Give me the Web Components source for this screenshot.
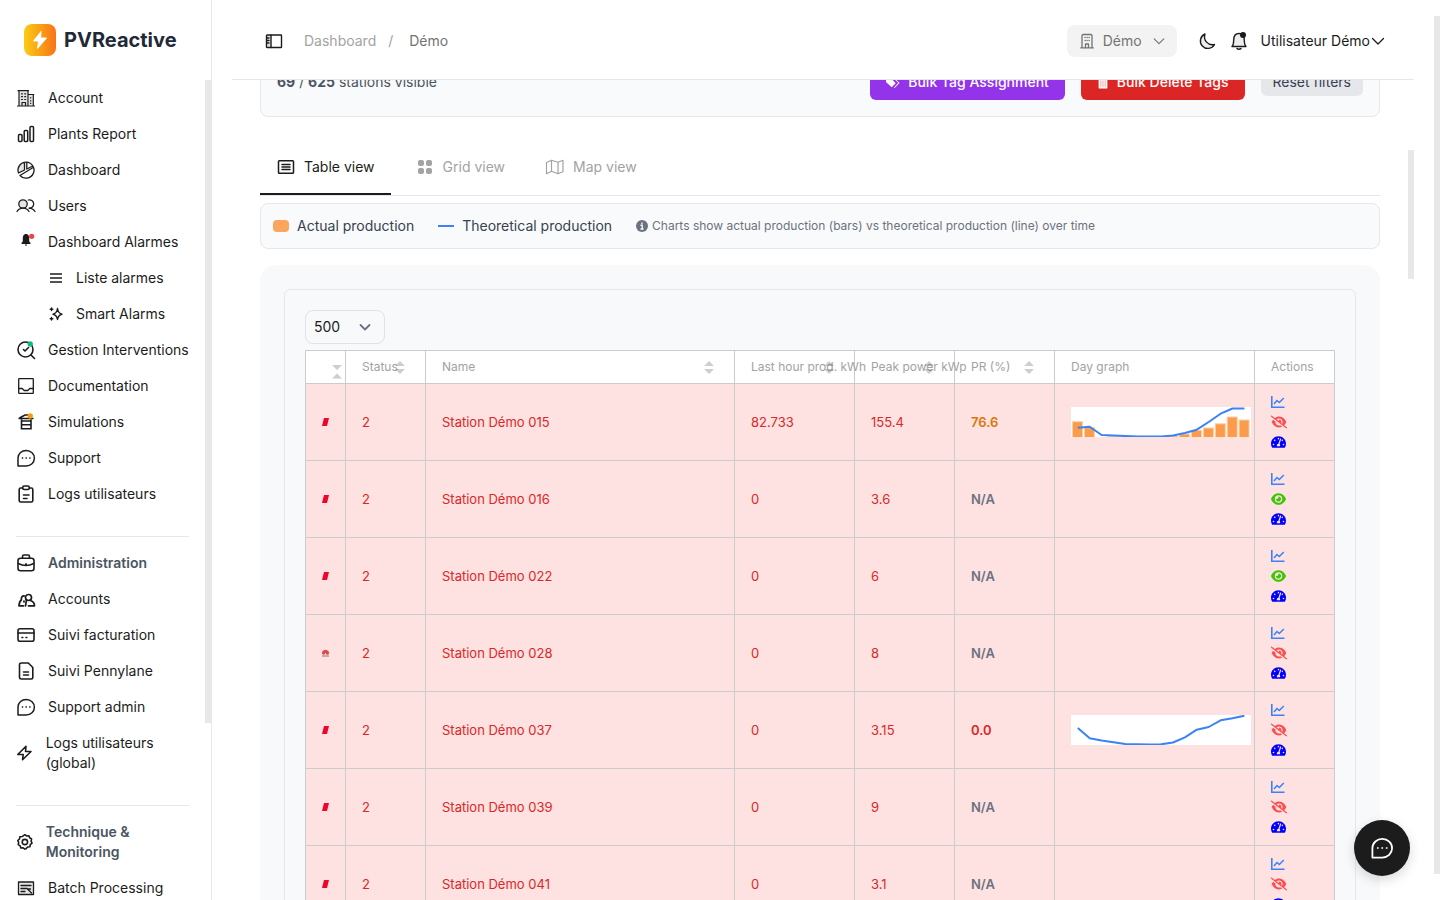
<!DOCTYPE html>
<html lang="fr">
<head>
<meta charset="utf-8">
<meta name="viewport" content="width=device-width, initial-scale=1">
<title>PVReactive</title>
<style>
  html, body { height: 100%; margin: 0; }
  body {
    font-family: Inter, "Liberation Sans", sans-serif;
    font-size: 14px;
    line-height: 20px;
    color: #1c1c1c;
    background: #fff;
    overflow: hidden;
  }
</style>
</head>
<body>
<pv-app></pv-app>

<script>
// every icon is drawn with currentColor; [viewBox, markup]
const LINE = 'fill="none" stroke="currentColor" stroke-linecap="round" stroke-linejoin="round"';
const ICONS = {
  bolt: ['0 0 32 32', '<path d="M17 7.5 9.500 17h5l-1 7.500L22.500 14h-5.800z" fill="#fff" stroke="#fff" stroke-width="1" stroke-linejoin="round"/>'],
  building: ['0 0 20 20', `<path d="M3 3h9v15H3zM13 6h4v12h-4z" fill="#e4e4e4"/><g ${LINE} stroke-width="1.2"><path d="M1.5 18h17M2 2.7h10.500M3 3v15M12 3v15M12 6.500h5.800M17.300 6.500V18M6 18v-3.500h3.500V18"/><path d="M5.500 5.800h1M8.700 5.800h1M5.500 8.700h1M8.700 8.700h1M5.500 11.500h1M8.700 11.500h1M14.700 9.500v.5M14.700 12.500v.5M14.700 15v.5"/></g>`],
  bars: ['0 0 20 20', `<g ${LINE} stroke-width="1.5"><rect x="2.5" y="10.5" width="3.5" height="7" rx="1"/><rect x="8.2" y="6.5" width="3.5" height="11" rx="1"/><rect x="14" y="2.5" width="3.5" height="15" rx="1"/></g>`],
  pie: ['0 0 20 20', `<path d="M9 2.5V10L3 13C1.5 8 4 3.5 9 2.5z" fill="#e4e4e4"/><g ${LINE} stroke-width="1.3"><path d="M2.5 13A8 8 0 1 1 4 15.5M2.5 13l6-3V2.3M10.8 2.3V9l6-3M4 15.5 17.5 7.3"/></g>`],
  users: ['0 0 20 20', `<circle cx="7" cy="8" r="4" fill="#e4e4e4"/><g ${LINE} stroke-width="1.3"><circle cx="7" cy="8" r="4.2"/><path d="M1 15.5C2.5 13 4.5 12.2 7 12.2s4.500.8 6 3.3M12.3 4a4.200 4.200 0 1 1 .7 8.200c2.500 0 4.500 1 6 3.300"/></g>`],
  alarm: ['0 0 20 20', '<path d="M10 2C7.300 2 6.800 4.500 6.800 6.500v2.700L5.500 11v1h9v-1l-1.300-1.800V6.500C13.200 4.500 12.700 2 10 2zM8.800 12.500h2.400L10 14.200z" fill="currentColor"/><circle cx="15.7" cy="4.3" r="2.6" fill="#ef4444"/>'],
  list: ['0 0 16 16', '<path d="M2 4h12M2 8h12M2 12h12" stroke="currentColor" stroke-width="1.4"/>'],
  sparkle: ['0 0 16 16', `<g ${LINE} stroke-width="1.4"><path d="M9.500 2.500c.5 3.500 1.500 5 4.500 5.700-3 .7-4 2-4.500 5.300-.5-3.300-1.500-4.600-4.500-5.300 3-.7 4-2.200 4.500-5.700z"/><path d="M3.500 2v2.600M2.200 3.300h2.600M3.500 11.500v2.600M2.200 12.800h2.600"/></g>`],
  searchCheck: ['0 0 20 20', `<g ${LINE} stroke-width="1.6"><circle cx="9.5" cy="9.5" r="7.5"/><path d="m15 15 3.5 3.5M7.5 9.5 9 11l3.500-3.500"/></g><circle cx="14.2" cy="4" r="2.7" fill="#10b981"/>`],
  inbox: ['0 0 20 20', `<g ${LINE} stroke-width="1.3"><rect x="2.7" y="2.7" width="14.6" height="14.6" rx=".6"/><path d="M2.700 12.500h3.500l2 2h3.600l2-2h3.500"/></g>`],
  archive: ['0 0 20 20', `<g fill="none" stroke="currentColor" stroke-width="1.6"><path d="M2.500 6.500h15M3.500 6 9 3h5M5.500 7.500v9.200h9.500V7.500M5.500 9h9.500M5.500 12.700h9.500"/></g><circle cx="14.2" cy="4" r="2.7" fill="#f59e0b"/>`],
  chat: ['0 0 20 20', `<g ${LINE} stroke-width="1.5"><path d="M2 18V10a8.200 7.800 0 1 1 8.200 8z"/></g><path d="M5.800 9.300h1.400v1.400H5.800zM9.500 9.300h1.400v1.400H9.500zM13.200 9.300h1.400v1.400h-1.400z" fill="currentColor"/>`],
  clipboard: ['0 0 20 20', `<g ${LINE} stroke-width="1.6"><path d="M6.500 4H4.700c-1 0-1.500.5-1.500 1.500v11c0 1 .5 1.500 1.500 1.500h10.600c1 0 1.500-.5 1.500-1.500v-11c0-1-.5-1.500-1.500-1.500h-1.800"/><rect x="6.7" y="2" width="6.6" height="3.5" rx="1.5"/><path d="M7.500 11h5.500M7.500 14.500h3.500"/></g>`],
  briefcase: ['0 0 20 20', `<g ${LINE} stroke-width="1.6"><rect x="2" y="5.3" width="16" height="12.5" rx="2.5"/><path d="M6.500 5V3.500C6.500 2.500 7 2 8 2h4c1 0 1.500.5 1.500 1.500V5M2.200 10.500c5 2.500 10.600 2.500 15.600 0M9.700 11h.6"/></g>`],
  people: ['0 0 20 20', `<g ${LINE} stroke-width="1.7"><circle cx="12.500" cy="8.500" r="3"/><path d="M10.500 11 9.500 16.800M14.500 11.500c2.500.8 4 2.500 4 5.300h-6M8.500 7c-2.500-.3-3.700 1.800-3 3.800-1.800 1.200-2.300 3.200-2.500 6h4.500M8 12v1"/></g>`],
  card: ['0 0 20 20', `<g ${LINE} stroke-width="1.6"><rect x="2" y="3.7" width="16" height="12.6" rx="2"/><path d="M2 8h16M6 12.500h.8M10 12.500h.8"/></g>`],
  file: ['0 0 20 20', `<g ${LINE} stroke-width="1.6"><path d="M5.500 2h6.800l4.500 4.500v9.800c0 1-.7 1.700-1.700 1.700H5.500c-1.200 0-2-.7-2-1.700V3.700c0-1 .8-1.700 2-1.700zM7.500 11h5M7.500 14h5"/></g>`],
  zap: ['0 0 20 20', `<g ${LINE} stroke-width="1.8"><path d="M11.300 2.300 2 11.700h6.200l-.8 6L17 8.300h-6.200z"/></g>`],
  gear: ['0 0 20 20', `<g ${LINE} stroke-width="1.8"><path d="m10 1.800 2 1.400 2.500-.3.800 2.300 2.200 1.300-.5 2.500 1 2.300-2 1.600-.4 2.500-2.500.2L11.300 17.500 10 18l-2-1.500-2.500.3-.8-2.400L2.500 13l.5-2.500-1-2.200 2-1.700.3-2.500 2.600-.2z"/><circle cx="10" cy="10" r="3"/></g>`],
  batch: ['0 0 20 20', `<rect x="3" y="4" width="14" height="12" fill="#e4e4e4"/><g ${LINE} stroke-width="1.3"><rect x="2.5" y="4" width="15" height="12.5"/><path d="M5 7.500h10M5 10.500h6M5 13.500h4M11.500 11l4 4M12 11h2.500"/></g>`],
  panel: ['0 0 20 20', `<path d="M3 4h4v13H3z" fill="#e4e4e4"/><g ${LINE} stroke-width="1.4"><rect x="2.5" y="4" width="15" height="12.5" rx=".6"/><path d="M7 4v12.500M3 7h2M3 9.500h2M3 12h2"/></g>`],
  office: ['0 0 20 20', `<g ${LINE} stroke-width="1.3"><path d="M5 16.500V4.800C5 4 5.500 3.500 6.300 3.500h7.400c.8 0 1.300.5 1.300 1.300v11.700M3.700 16.800h12.600M8.500 16.500v-3.500h3v3.500"/><path d="M8 6.500h.2M10 6.500h.2M12 6.500h.2M8 9.500h.2M10 9.500h.2M12 9.500h.2"/></g>`],
  chevron: ['0 0 16 16', `<path ${LINE} stroke-width="1.3" d="m2.500 5.500 5.500 5.500 5.500-5.500"/>`],
  chevronBold: ['0 0 12 12', `<path ${LINE} stroke-width="1.8" d="m1.500 4 4.500 4.500L10.500 4"/>`],
  moon: ['0 0 20 20', '<path d="M8 3a8 8 0 0 0 9.500 10.500A7.500 7.500 0 1 1 8 3z" fill="#ededed" stroke="currentColor" stroke-width="1.4" stroke-linejoin="round"/>'],
  bell: ['0 0 20 20', `<path d="M3 15.500h14c-1.700-1.700-1.700-3.500-1.700-6.500 0-4.500-2.300-6.500-5.300-6.500S4.700 4.500 4.700 9c0 3 0 4.800-1.700 6.500z" fill="#ededed"/><g ${LINE} stroke-width="1.4"><path d="M3 15.500h14c-1.700-1.700-1.700-3.500-1.700-6.500 0-4.500-2.300-6.500-5.300-6.500S4.700 4.500 4.700 9c0 3 0 4.800-1.700 6.500zM8 17.500c.8 1 3.200 1 4 0"/></g><circle cx="14" cy="4" r="3" fill="currentColor"/>`],
  table: ['0 0 20 20', `<g ${LINE} stroke-width="1.5"><rect x="2.5" y="3.7" width="15" height="12.6" rx=".8"/><path d="M6 7.500h8M6 10h8M6 12.500h8"/></g>`],
  grid: ['0 0 20 20', '<g fill="currentColor"><rect x="3" y="3" width="6" height="6" rx="2"/><rect x="11" y="3" width="6" height="6" rx="2"/><rect x="3" y="11" width="6" height="6" rx="2"/><rect x="11" y="11" width="6" height="6" rx="2"/></g>'],
  map: ['0 0 20 20', `<g ${LINE} stroke-width="1.2"><path d="m1.500 5.500 5-2.200L13 5.300l5-2v11.400l-5 2-6.500-2.400-5 2.400zM6.500 3.500v10.700M13 5.300v11.200"/></g>`],
  tags: ['0 0 16 16', '<path d="M0 3v5l6.500 6L11 9.500 5 3zM8 3l6 6-5 5.200.8.6 5.700-5.800L9 3z" fill="currentColor"/>'],
  trash: ['0 0 12 16', '<path d="M1 4h10v10.500c0 .6-.4 1-1 1H2c-.6 0-1-.4-1-1zM0 1.500h12V3H0zM4 .5h4v1H4z" fill="currentColor"/><path d="M3.500 6v7.500M6 6v7.500M8.500 6v7.500" stroke="#f08080" stroke-width=".8"/>'],
  info: ['0 0 16 16', '<circle cx="8" cy="8" r="8" fill="currentColor"/><path d="M8 3.300v2M6 7h2.300v5M6 12h4" stroke="#fff" stroke-width="1.7" fill="none"/>'],
  chart: ['0 0 16 16', '<path d="M.8 2v11.200h12.700" stroke="currentColor" stroke-width="1.6" fill="none"/><path d="m3 10 3-3.500 2.300 2L12.800 4" stroke="currentColor" stroke-width="1.5" fill="none"/>'],
  eye: ['0 0 576 512', '<path fill="currentColor" d="M288 32c-80.8 0-145.5 36.8-192.6 80.6C48.6 156 17.3 208 2.5 243.7c-3.3 7.9-3.3 16.7 0 24.6C17.3 304 48.6 356 95.4 399.4C142.5 443.2 207.2 480 288 480s145.5-36.8 192.6-80.6c46.8-43.5 78.1-95.4 93-131.1c3.3-7.9 3.3-16.7 0-24.6c-14.9-35.7-46.2-87.7-93-131.1C433.5 68.8 368.8 32 288 32zM144 256a144 144 0 1 1 288 0 144 144 0 1 1 -288 0zm144-64c0 35.3-28.7 64-64 64c-7.1 0-13.9-1.2-20.3-3.3c-5.5-1.8-11.9 1.6-11.7 7.4c.3 6.9 1.3 13.8 3.2 20.7c13.7 51.2 66.4 81.6 117.6 67.9s81.6-66.4 67.9-117.6c-11.1-41.5-47.8-69.4-88.6-71.1c-5.8-.2-9.2 6.1-7.4 11.7c2.1 6.4 3.3 13.2 3.3 20.3z"/>'],
  eyeSlash: ['0 0 640 512', '<path fill="currentColor" d="M38.8 5.1C28.4-3.1 13.3-1.2 5.1 9.2S-1.2 34.7 9.2 42.9l592 464c10.4 8.2 25.5 6.3 33.7-4.1s6.3-25.5-4.1-33.7L525.6 386.7c39.6-40.6 66.4-86.1 79.9-118.4c3.3-7.9 3.3-16.7 0-24.6c-14.9-35.7-46.2-87.7-93-131.1C465.5 68.8 400.8 32 320 32c-68.2 0-125 26.3-169.3 60.8L38.8 5.1zM223.1 149.5C248.6 126.2 282.7 112 320 112c79.5 0 144 64.5 144 144c0 24.9-6.3 48.3-17.4 68.7L408 294.5c8.4-19.3 10.6-41.4 4.8-63.3c-11.1-41.5-47.8-69.4-88.6-71.1c-5.8-.2-9.2 6.1-7.4 11.7c2.1 6.4 3.3 13.2 3.3 20.3c0 10.2-2.4 19.8-6.6 28.3l-90.3-70.8zM373 389.9c-16.4 6.5-34.3 10.1-53 10.1c-79.5 0-144-64.5-144-144c0-6.9 .5-13.6 1.4-20.2L83.1 161.5C60.3 191.2 44 220.8 34.5 243.7c-3.3 7.9-3.3 16.7 0 24.6c14.9 35.7 46.2 87.7 93 131.1C174.5 443.2 239.2 480 320 480c47.8 0 89.9-12.9 126.2-32.5L373 389.9z"/>'],
  gauge: ['0 0 576 512', '<path fill="currentColor" d="M288 32C128.94 32 0 160.94 0 320c0 52.8 14.25 102.26 39.06 144.8 5.61 9.62 16.3 15.2 27.44 15.2h443c11.14 0 21.83-5.58 27.44-15.2C561.75 422.26 576 372.8 576 320c0-159.06-128.94-288-288-288zm0 64c14.71 0 26.58 10.13 30.32 23.65-1.11 2.26-2.64 4.23-3.45 6.67l-9.22 27.67c-5.13 3.49-10.97 6.01-17.64 6.01-17.67 0-32-14.33-32-32S270.33 96 288 96zM96 384c-17.67 0-32-14.33-32-32s14.33-32 32-32 32 14.33 32 32-14.33 32-32 32zm48-160c-17.67 0-32-14.33-32-32s14.33-32 32-32 32 14.33 32 32-14.33 32-32 32zm246.77-72.41l-61.33 184C343.13 347.33 352 364.54 352 384c0 11.72-3.38 22.55-8.88 32H232.88c-5.5-9.45-8.88-20.28-8.88-32 0-33.94 26.5-61.43 59.9-63.59l61.34-184.01c4.17-12.56 17.73-19.45 30.36-15.17 12.57 4.19 19.35 17.79 15.17 30.36zm14.66 57.2l15.52-46.55c3.47-1.29 7.13-2.23 11.05-2.23 17.67 0 32 14.33 32 32s-14.33 32-32 32c-11.38-.01-20.89-6.28-26.57-15.22zM480 384c-17.67 0-32-14.33-32-32s14.33-32 32-32 32 14.33 32 32-14.33 32-32 32z"/>'],
  sort: ['0 0 10 14', '<path d="M0 6 5 1l5 5zM0 9h10l-5 5z" fill="currentColor"/>'],
  sortFlip: ['0 0 10 14', '<path d="M0 0h10L5 5zM0 13.500l5-5 5 5z" fill="currentColor"/>'],
  brandSlash: ['0 0 8 8', '<path d="M2 0h5L5 8H0z" fill="#f0042c"/>'],
  brandPetals: ['0 0 8 8', '<path d="M0 5C0 3 .5 1.500 1.500 1.500 3 .5 4 .5 5.500 1.500 6.500 1.500 7 3 7 5L5 6 3.500 4 2 6z" fill="#e04848"/><path d="M0 7h7" stroke="#8a7070"/>']
};

class PvIcon extends HTMLElement {
  constructor() {
    super();
    this.attachShadow({ mode: 'open' });
  }

  connectedCallback() {
    const [box, body] = ICONS[this.getAttribute('name')];
    this.shadowRoot.innerHTML = `
      <style>
        :host { display: block; width: 20px; height: 20px; }
        svg { display: block; width: 100%; height: 100%; }
      </style>
      <svg viewBox="${box}" aria-hidden="true">${body}</svg>
    `;
  }
}
customElements.define('pv-icon', PvIcon);

class PvNavItem extends HTMLElement {
  constructor() {
    super();
    this.attachShadow({ mode: 'open' });
  }

  connectedCallback() {
    this.shadowRoot.innerHTML = `
      <style>
        :host { display: block; }
        a {
          display: flex;
          align-items: center;
          gap: 12px;
          padding: 8px 0;
          color: inherit;
          text-decoration: none;
        }
        :host([sub]) a { padding-left: 32px; }
        :host([sub]) pv-icon { width: 16px; height: 16px; }
        :host([heading]) { color: #4b5563; font-weight: 600; }
        :host([heading]) pv-icon { color: #1c1c1c; }
      </style>
      <a href="#"><pv-icon name="${this.getAttribute('icon')}"></pv-icon><span><slot></slot></span></a>
    `;
  }
}
customElements.define('pv-nav-item', PvNavItem);

class PvSidebar extends HTMLElement {
  constructor() {
    super();
    this.attachShadow({ mode: 'open' });
  }

  connectedCallback() {
    this.shadowRoot.innerHTML = `
      <style>
        :host {
          display: flex;
          flex-direction: column;
          position: relative;
          box-sizing: border-box;
          width: 212px;
          border-right: 1px solid #e5e7eb;
          overflow: hidden;
        }
        .brand {
          flex: none;
          display: flex;
          align-items: center;
          gap: 8px;
          padding: 24px;
          font-size: 20px;
          line-height: 32px;
          font-weight: 700;
          color: #1f2937;
        }
        .logo {
          border-radius: 8px;
          background: linear-gradient(90deg, #facc15, #f97316);
        }
        .logo pv-icon { width: 32px; height: 32px; }
        nav {
          flex: 1;
          min-height: 0;
          overflow: hidden;
          padding: 0 22px 0 16px;
        }
        hr {
          height: 1px;
          margin: 24px 0 8px;
          border: 0;
          background: #e5e7eb;
        }
        .thumb {
          position: absolute;
          top: 80px;
          right: 0;
          width: 6px;
          height: 643px;
          background: #e8e8e8;
        }
      </style>
      <div class="brand"><span class="logo"><pv-icon name="bolt"></pv-icon></span>PVReactive</div>
      <nav>
        <pv-nav-item icon="building">Account</pv-nav-item>
        <pv-nav-item icon="bars">Plants Report</pv-nav-item>
        <pv-nav-item icon="pie">Dashboard</pv-nav-item>
        <pv-nav-item icon="users">Users</pv-nav-item>
        <pv-nav-item icon="alarm">Dashboard Alarmes</pv-nav-item>
        <pv-nav-item sub icon="list">Liste alarmes</pv-nav-item>
        <pv-nav-item sub icon="sparkle">Smart Alarms</pv-nav-item>
        <pv-nav-item icon="searchCheck">Gestion Interventions</pv-nav-item>
        <pv-nav-item icon="inbox">Documentation</pv-nav-item>
        <pv-nav-item icon="archive">Simulations</pv-nav-item>
        <pv-nav-item icon="chat">Support</pv-nav-item>
        <pv-nav-item icon="clipboard">Logs utilisateurs</pv-nav-item>
        <hr>
        <pv-nav-item heading icon="briefcase">Administration</pv-nav-item>
        <pv-nav-item icon="people">Accounts</pv-nav-item>
        <pv-nav-item icon="card">Suivi facturation</pv-nav-item>
        <pv-nav-item icon="file">Suivi Pennylane</pv-nav-item>
        <pv-nav-item icon="chat">Support admin</pv-nav-item>
        <pv-nav-item icon="zap">Logs utilisateurs (global)</pv-nav-item>
        <hr>
        <pv-nav-item heading icon="gear">Technique &amp; Monitoring</pv-nav-item>
        <pv-nav-item icon="batch">Batch Processing</pv-nav-item>
      </nav>
      <div class="thumb"></div>
    `;
  }
}
customElements.define('pv-sidebar', PvSidebar);

class PvTopbar extends HTMLElement {
  constructor() {
    super();
    this.attachShadow({ mode: 'open' });
  }

  connectedCallback() {
    this.shadowRoot.innerHTML = `
      <style>
        :host {
          display: flex;
          align-items: center;
          flex: none;
          padding: 25px 28px 22px;
          border-bottom: 1px solid #e5e7eb;
        }
        button {
          display: flex;
          align-items: center;
          border: 0;
          padding: 0;
          background: none;
          font: inherit;
          color: inherit;
        }
        .toggle { padding: 0 4px; }
        .crumbs { display: flex; gap: 12px; margin-left: 16px; color: #a3a3a3; }
        .crumbs a { color: inherit; text-decoration: none; }
        .crumbs .here { color: #737373; margin-left: 4px; }
        .right { display: flex; align-items: center; gap: 12px; margin-left: auto; }
        .account {
          gap: 6px;
          height: 32px;
          padding: 0 10px;
          margin-right: 8px;
          border-radius: 8px;
          background: #f3f3f3;
          color: #737373;
        }
        .account .arrow { width: 14px; height: 14px; margin: 0 1px 0 4px; }
        .user .arrow { width: 16px; height: 16px; }
      </style>
      <button class="toggle" aria-label="Menu"><pv-icon name="panel"></pv-icon></button>
      <div class="crumbs"><a href="#">Dashboard</a><span>/</span><span class="here">Démo</span></div>
      <div class="right">
        <button class="account"><pv-icon name="office"></pv-icon>Démo<pv-icon class="arrow" name="chevron"></pv-icon></button>
        <button aria-label="Thème"><pv-icon name="moon"></pv-icon></button>
        <button aria-label="Notifications"><pv-icon name="bell"></pv-icon></button>
        <button class="user">Utilisateur Démo<pv-icon class="arrow" name="chevron"></pv-icon></button>
      </div>
    `;
  }
}
customElements.define('pv-topbar', PvTopbar);

class PvFilterBar extends HTMLElement {
  constructor() {
    super();
    this.attachShadow({ mode: 'open' });
  }

  connectedCallback() {
    this.shadowRoot.innerHTML = `
      <style>
        :host {
          display: flex;
          align-items: center;
          gap: 16px;
          padding: 16px;
          border: 1px solid #e5e7eb;
          border-radius: 8px;
          background: #f9fafb;
          color: #4b5563;
        }
        .count { margin-right: auto; }
        b { font-weight: 700; }
        button {
          display: flex;
          align-items: center;
          gap: 8px;
          height: 36px;
          padding: 0 16px;
          border: 0;
          border-radius: 6px;
          font: inherit;
          font-weight: 500;
          color: #fff;
        }
        pv-icon { width: 14px; height: 14px; }
        .tag { background: #9333ea; }
        .delete { background: #dc2626; }
        .delete pv-icon { width: 12px; }
        .reset {
          height: 28px;
          padding: 0 12px;
          font-weight: 400;
          background: #e5e7eb;
          color: #374151;
        }
      </style>
      <span class="count"><b>69</b> / <b>625</b> stations visible</span>
      <button class="tag"><pv-icon name="tags"></pv-icon>Bulk Tag Assignment</button>
      <button class="delete"><pv-icon name="trash"></pv-icon>Bulk Delete Tags</button>
      <button class="reset">Reset filters</button>
    `;
  }
}
customElements.define('pv-filter-bar', PvFilterBar);

class PvTabs extends HTMLElement {
  constructor() {
    super();
    this.attachShadow({ mode: 'open' });
  }

  connectedCallback() {
    this.shadowRoot.innerHTML = `
      <style>
        :host {
          display: flex;
          gap: 8px;
          margin-top: 22px;
          box-shadow: 0 1px #e5e7eb;
        }
        button {
          display: flex;
          align-items: center;
          gap: 8px;
          height: 56px;
          padding: 0 16px;
          border: 0;
          background: none;
          font: inherit;
          color: #a3a3a3;
        }
        .active { color: #1c1c1c; box-shadow: inset 0 -2px #1c1c1c; }
      </style>
      <button class="active"><pv-icon name="table"></pv-icon>Table view</button>
      <button><pv-icon name="grid"></pv-icon>Grid view</button>
      <button><pv-icon name="map"></pv-icon>Map view</button>
    `;
  }
}
customElements.define('pv-tabs', PvTabs);

class PvLegend extends HTMLElement {
  constructor() {
    super();
    this.attachShadow({ mode: 'open' });
  }

  connectedCallback() {
    this.shadowRoot.innerHTML = `
      <style>
        :host {
          display: flex;
          gap: 24px;
          margin-top: 8px;
          padding: 12px;
          border: 1px solid #e5e7eb;
          border-radius: 8px;
          background: #f9fafb;
          color: #374151;
        }
        span { display: flex; align-items: center; gap: 8px; }
        .bar { width: 16px; height: 12px; border-radius: 4px; background: #fba55f; }
        .line { width: 16px; height: 2px; background: #3b82f6; }
        .note { gap: 4px; font-size: 12px; color: #6b7280; }
        .note pv-icon { width: 12px; height: 12px; }
      </style>
      <span><i class="bar"></i>Actual production</span>
      <span><i class="line"></i>Theoretical production</span>
      <span class="note"><pv-icon name="info"></pv-icon>Charts show actual production (bars) vs theoretical production (line) over time</span>
    `;
  }
}
customElements.define('pv-legend', PvLegend);

// "bars" and "line" hold the top of each step, in pixels from the chart's top
class PvDayGraph extends HTMLElement {
  constructor() {
    super();
    this.attachShadow({ mode: 'open' });
  }

  connectedCallback() {
    const read = name => (this.getAttribute(name) || '').split(' ').filter(Boolean).map(Number);
    const step = 11.9;
    const bars = read('bars').map((y, i) =>
      `<rect x="${1.5 + i * step}" y="${y}" width="10" height="${31 - y}"/>`).join('');
    const points = read('line').map((y, i) => `${6.8 + i * step},${y}`).join(' ');
    this.shadowRoot.innerHTML = `
      <style>
        :host { display: block; width: 180px; height: 30px; background: #fff; }
        svg { display: block; }
      </style>
      <svg width="180" height="30" viewBox="0 0 180 30" aria-hidden="true">
        <g fill="#fb9c4c" stroke="#fdd0a6" stroke-width="1">${bars}</g>
        <polyline points="${points}" fill="none" stroke="#3b82f6" stroke-width="2" stroke-linejoin="round"/>
      </svg>
    `;
  }
}
customElements.define('pv-day-graph', PvDayGraph);

const STATIONS = [
  { name: 'Station Démo 015', last: '82.733', peak: '155.4', pr: '76.6', level: 'warn',
    bars: '14.7 20.7 31 29.5 29.5 30 30 30 29 27 23.3 21 16.8 10 13',
    line: '20.7 19.7 28 28.4 29 29.5 29.6 29.5 28.5 26 22.7 15 6.7 1.5 1.5' },
  { name: 'Station Démo 016', last: '0', peak: '3.6', pr: 'N/A', shown: true },
  { name: 'Station Démo 022', last: '0', peak: '6', pr: 'N/A', shown: true },
  { name: 'Station Démo 028', last: '0', peak: '8', pr: 'N/A', brand: 'brandPetals' },
  { name: 'Station Démo 037', last: '0', peak: '3.15', pr: '0.0', level: 'bad',
    line: '13 23.3 25.5 27.3 29 29.3 29.5 29.3 27.5 22.3 14.7 12 5.3 3.2 0.7' },
  { name: 'Station Démo 039', last: '0', peak: '9', pr: 'N/A' },
  { name: 'Station Démo 041', last: '0', peak: '3.1', pr: 'N/A' }
];

class PvStationTable extends HTMLElement {
  constructor() {
    super();
    this.attachShadow({ mode: 'open' });
  }

  head(label, sortable = true) {
    return `<th><div class="head"><span>${label}</span>${sortable ? '<pv-icon name="sort"></pv-icon>' : ''}</div></th>`;
  }

  row(s) {
    const graph = s.line ? `<pv-day-graph bars="${s.bars || ''}" line="${s.line}"></pv-day-graph>` : '';
    return `
      <tr>
        <td><pv-icon class="brand" name="${s.brand || 'brandSlash'}"></pv-icon></td>
        <td>2</td>
        <td>${s.name}</td>
        <td>${s.last}</td>
        <td>${s.peak}</td>
        <td class="pr ${s.level || ''}">${s.pr}</td>
        <td>${graph}</td>
        <td>
          <div class="actions">
            <a class="chart" href="#" aria-label="Graph"><pv-icon name="chart"></pv-icon></a>
            <a class="${s.shown ? 'show' : 'hide'}" href="#" aria-label="Visibility"><pv-icon name="${s.shown ? 'eye' : 'eyeSlash'}"></pv-icon></a>
            <a class="gauge" href="#" aria-label="Monitoring"><pv-icon name="gauge"></pv-icon></a>
          </div>
        </td>
      </tr>
    `;
  }

  connectedCallback() {
    this.shadowRoot.innerHTML = `
      <style>
        :host {
          display: block;
          margin-top: 16px;
          padding: 24px;
          border-radius: 16px;
          background: #f8f9fb;
        }
        .box {
          padding: 20px;
          border: 1px solid #e5e7eb;
          border-radius: 6px;
        }
        .size { display: inline-grid; align-items: center; vertical-align: top; margin-bottom: 6px; }
        .size select, .size pv-icon { grid-area: 1 / 1; }
        .size pv-icon {
          width: 12px;
          height: 12px;
          justify-self: end;
          margin-right: 14px;
          color: #6b7280;
          pointer-events: none;
        }
        select {
          appearance: none;
          width: 80px;
          height: 34px;
          padding: 0 8px;
          border: 1px solid #e0e2e6;
          border-radius: 8px;
          background: transparent;
          font: inherit;
          color: #1c1c1c;
        }
        table {
          width: 100%;
          table-layout: fixed;
          border-collapse: separate;
          border-spacing: 0;
          border-left: 1px solid #ccc;
          border-top: 1px solid #ccc;
          font-size: 13px;
        }
        th, td {
          box-sizing: border-box;
          padding: 0 0 0 16px;
          border-right: 1px solid #ccc;
          border-bottom: 1px solid #ccc;
          text-align: left;
          font-weight: 400;
        }
        thead tr { background: #fff; }
        th { height: 33px; padding-right: 20px; font-size: 12px; color: #a3a3a3; white-space: nowrap; }
        .head { display: grid; grid-template-columns: minmax(0, 1fr); align-items: center; }
        .head span, .head pv-icon { grid-area: 1 / 1; }
        .head pv-icon { width: 10px; height: 14px; justify-self: end; color: rgba(60, 60, 67, 0.25); }
        th:first-child { padding: 10px 3px 0 0; }
        tbody tr { background: #fee2e2; color: #dc2626; }
        td { height: 77px; }
        .brand { width: 8px; height: 8px; }
        .pr { font-weight: 600; color: #6b7280; }
        .pr.warn { color: #d97706; }
        .pr.bad { color: #dc2626; }
        .actions { display: grid; gap: 4px; justify-items: start; }
        .actions pv-icon { width: 16px; height: 16px; }
        .chart { color: #3b82f6; }
        .hide { color: #ff4d4f; }
        .show { color: #38c800; }
        .gauge { color: #0000ff; }
        .actions .show pv-icon, .actions .gauge pv-icon { width: 15px; }
      </style>
      <div class="box">
        <label class="size">
          <select aria-label="Page size"><option>500</option></select>
          <pv-icon name="chevronBold"></pv-icon>
        </label>
        <table>
          <colgroup>
            <col style="width: 40px"><col style="width: 80px"><col><col style="width: 120px">
            <col style="width: 100px"><col style="width: 100px"><col style="width: 200px"><col style="width: 80px">
          </colgroup>
          <thead>
            <tr>
              <th><div class="head"><pv-icon name="sortFlip"></pv-icon></div></th>
              ${this.head('Status')}
              ${this.head('Name')}
              ${this.head('Last hour prod. kWh')}
              ${this.head('Peak power kWp')}
              ${this.head('PR (%)')}
              ${this.head('Day graph', false)}
              ${this.head('Actions', false)}
            </tr>
          </thead>
          <tbody>${STATIONS.map(s => this.row(s)).join('')}</tbody>
        </table>
      </div>
    `;
  }
}
customElements.define('pv-station-table', PvStationTable);

class PvChatButton extends HTMLElement {
  constructor() {
    super();
    this.attachShadow({ mode: 'open' });
  }

  connectedCallback() {
    this.shadowRoot.innerHTML = `
      <style>
        :host { display: block; position: fixed; right: 30px; bottom: 24px; }
        button {
          display: grid;
          place-items: center;
          width: 56px;
          height: 56px;
          padding: 0;
          border: 0;
          border-radius: 50%;
          background: #1c1c1c;
          color: #fff;
          box-shadow: 0 4px 12px rgba(0, 0, 0, 0.15);
        }
        pv-icon { width: 24px; height: 24px; }
      </style>
      <button aria-label="Support"><pv-icon name="chat"></pv-icon></button>
    `;
  }
}
customElements.define('pv-chat-button', PvChatButton);

class PvApp extends HTMLElement {
  constructor() {
    super();
    this.attachShadow({ mode: 'open' });
  }

  connectedCallback() {
    this.shadowRoot.innerHTML = `
      <style>
        :host { display: flex; height: 100vh; }
        pv-sidebar { flex: none; }
        main {
          flex: 1;
          min-width: 0;
          display: flex;
          flex-direction: column;
          position: relative;
          margin: 0 26px 0 20px;
        }
        .scroll {
          flex: 1;
          min-height: 0;
          overflow: hidden;
          padding: 0 34px 0 28px;
        }
        .thumb { position: absolute; background: #e8e8e8; width: 6px; }
        .inner { top: 150px; right: 0; height: 129px; }
        .outer { position: fixed; top: 16px; right: 0; bottom: 26px; }
      </style>
      <pv-sidebar></pv-sidebar>
      <main>
        <pv-topbar></pv-topbar>
        <div class="scroll">
          <pv-filter-bar></pv-filter-bar>
          <pv-tabs></pv-tabs>
          <pv-legend></pv-legend>
          <pv-station-table></pv-station-table>
        </div>
        <div class="thumb inner"></div>
      </main>
      <div class="thumb outer"></div>
      <pv-chat-button></pv-chat-button>
    `;
    // the filter bar starts partly scrolled under the top bar
    this.shadowRoot.querySelector('.scroll').scrollTop = 33;
  }
}
customElements.define('pv-app', PvApp);
</script>
</body>
</html>
